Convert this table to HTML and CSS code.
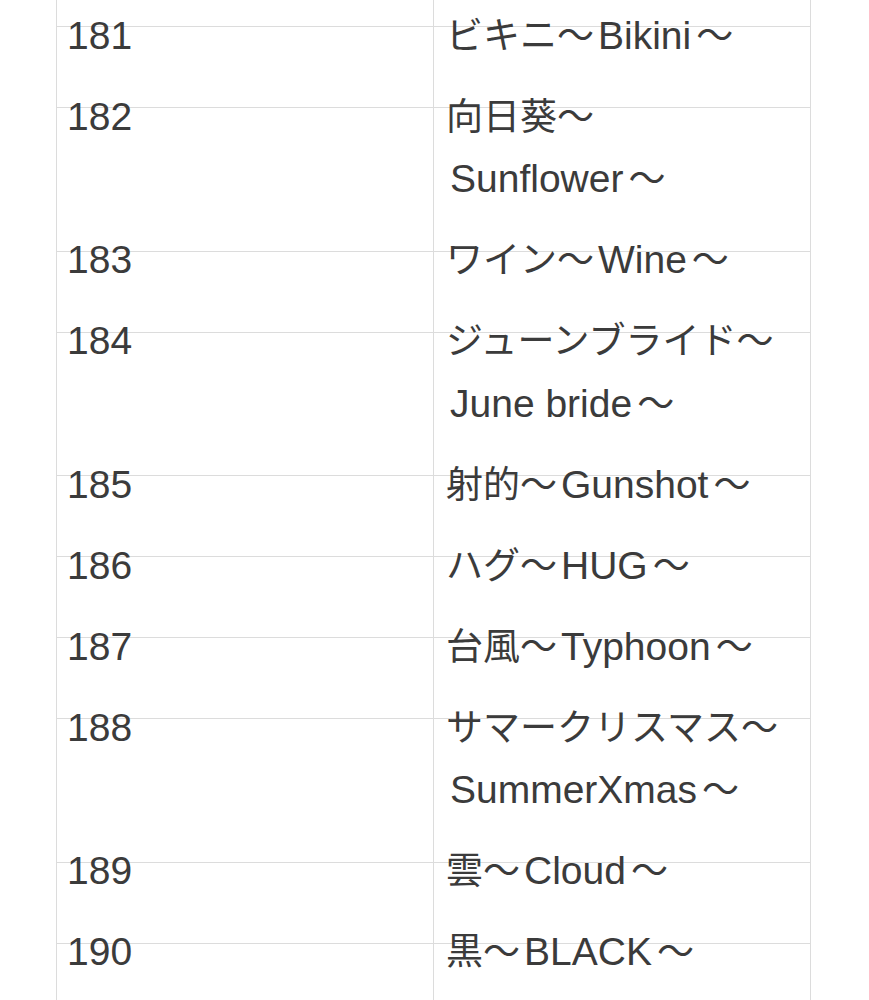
FILE: index.html
```html
<!DOCTYPE html>
<html lang="ja">
<head>
<meta charset="utf-8">
<title>List</title>
<link rel="stylesheet" href="styles.css">
</head>
<body>
<div class="table">
  <div class="row row-top"><div class="cell"></div><div class="cell"></div></div>
  <div class="row"><div class="cell num"><div class="txt">181</div></div><div class="cell"><div class="txt"><span class="ja">ビキニ～</span>Bikini<span class="ja t">～</span></div></div></div>
  <div class="row"><div class="cell num"><div class="txt">182</div></div><div class="cell"><div class="txt"><span class="ja">向日葵～</span><br>Sunflower<span class="ja t">～</span></div></div></div>
  <div class="row"><div class="cell num"><div class="txt">183</div></div><div class="cell"><div class="txt"><span class="ja">ワイン～</span>Wine<span class="ja t">～</span></div></div></div>
  <div class="row"><div class="cell num"><div class="txt">184</div></div><div class="cell"><div class="txt"><span class="ja">ジューンブライド～</span><br>June bride<span class="ja t">～</span></div></div></div>
  <div class="row"><div class="cell num"><div class="txt">185</div></div><div class="cell"><div class="txt"><span class="ja">射的～</span>Gunshot<span class="ja t">～</span></div></div></div>
  <div class="row"><div class="cell num"><div class="txt">186</div></div><div class="cell"><div class="txt"><span class="ja">ハグ～</span>HUG<span class="ja t">～</span></div></div></div>
  <div class="row"><div class="cell num"><div class="txt">187</div></div><div class="cell"><div class="txt"><span class="ja">台風～</span>Typhoon<span class="ja t">～</span></div></div></div>
  <div class="row"><div class="cell num"><div class="txt">188</div></div><div class="cell"><div class="txt"><span class="ja">サマークリスマス～</span><br>SummerXmas<span class="ja t">～</span></div></div></div>
  <div class="row"><div class="cell num"><div class="txt">189</div></div><div class="cell"><div class="txt"><span class="ja">雲～</span>Cloud<span class="ja t">～</span></div></div></div>
  <div class="row"><div class="cell num"><div class="txt">190</div></div><div class="cell"><div class="txt"><span class="ja">黒～</span>BLACK<span class="ja t">～</span></div></div></div>
</div>
</body>
</html>
```
FILE: styles.css
```css
html, body {
  margin: 0;
  padding: 0;
  background: #ffffff;
}
body {
  font-family: "Liberation Sans", "Noto Sans CJK JP", sans-serif;
  font-size: 39px;
  color: #3b3b3b;
}
.table {
  margin-left: 56px;
  width: 755px;
  box-sizing: border-box;
  border-left: 1px solid #dcdcdc;
  border-right: 1px solid #dcdcdc;
}
.row {
  display: grid;
  grid-template-columns: 376px 1fr;
  border-top: 1px solid #dcdcdc;
}
.row-top {
  border-top: none;
  height: 26px;
}
.cell {
  padding: 0 10px 40px 16px;
  min-width: 0;
}
.cell.num {
  padding-left: 10px;
}
.cell + .cell {
  border-left: 1px solid #dcdcdc;
}
.row-top .cell {
  padding: 0;
}
.txt {
  margin-top: -22.5px;
  line-height: 62.5px;
  white-space: nowrap;
}
.ja {
  font-family: "Noto Sans CJK JP", sans-serif;
  font-size: 37px;
  line-height: 1;
}
.txt > .ja:first-child {
  margin-left: -4px;
  margin-right: 4px;
}
.ja.t {
  margin-left: 5px;
}
```
